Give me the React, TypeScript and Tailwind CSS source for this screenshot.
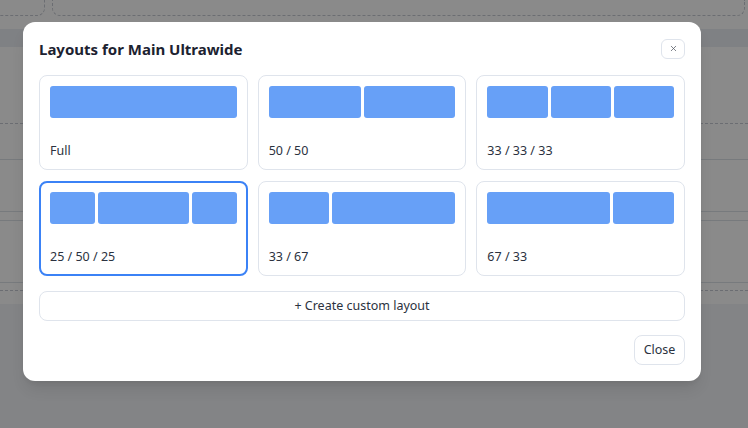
import { X } from "lucide-react"

type Layout = {
  name: string
  parts: number[]
}

const layouts: Layout[] = [
  { name: "Full", parts: [100] },
  { name: "50 / 50", parts: [50, 50] },
  { name: "33 / 33 / 33", parts: [33, 33, 33] },
  { name: "25 / 50 / 25", parts: [25, 50, 25] },
  { name: "33 / 67", parts: [33, 67] },
  { name: "67 / 33", parts: [67, 33] },
]

const selected = "25 / 50 / 25"

function LayoutCard({ layout }: { layout: Layout }) {
  const active = layout.name === selected
  return (
    <button
      className={
        active
          ? "flex h-[95px] flex-col justify-between rounded-lg border-2 border-[#3b82f6] bg-white p-[9px] text-left"
          : "flex h-[95px] flex-col justify-between rounded-lg border border-[#dfe4ec] bg-white p-[10px] text-left"
      }
    >
      <div className="flex h-[32px] w-full gap-[3px]">
        {layout.parts.map((p, i) => (
          <div key={i} className="h-full rounded-[3px] bg-[#67a0f7]" style={{ flexGrow: p, flexBasis: 0 }} />
        ))}
      </div>
      <span className="text-[12.5px] leading-[16px] text-[#2b3240]">{layout.name}</span>
    </button>
  )
}

export default function App() {
  return (
    <div className="relative h-[428px] w-[748px] overflow-hidden bg-white font-['Noto_Sans',sans-serif]">
      {/* page underneath */}
      <div className="flex h-[29px] gap-[7px] px-0">
        <div className="ml-[-10px] h-[16px] w-[55px] rounded-b-lg border border-t-0 border-dashed border-[#c6cad2]" />
        <div className="h-[16px] w-[693px] rounded-b-lg border border-t-0 border-dashed border-[#c6cad2]" />
      </div>
      <div className="h-[18px] bg-[#ebeff4]" />
      <div className="h-[77px] border-b border-dashed border-[#c6cad2]" />
      <div className="h-[36px] border-b border-[#dde1e8]" />
      <div className="h-[52px] border-b border-[#dde1e8]" />
      <div className="h-[9px] border-b border-[#dde1e8]" />
      <div className="h-[62px] border-b border-[#dde1e8]" />
      <div className="h-[8px] border-b border-dashed border-[#c6cad2]" />
      <div className="h-[13px]" />
      <div className="h-[124px] bg-[#f3f4f7]" />

      {/* overlay */}
      <div className="absolute inset-0 bg-black/[0.46] pl-[23px] pt-[22px]">
        <div className="flex w-[678px] flex-col rounded-xl bg-white p-4 shadow-lg">
          <div className="flex h-[21px] items-center justify-between">
            <h2 className="text-[15px] font-bold leading-[22px] text-[#1c2230]">Layouts for Main Ultrawide</h2>
            <button className="flex h-[20px] w-[24px] items-center justify-center rounded-md border border-[#dfe4ec] bg-white text-[#555b66]">
              <X size={9} strokeWidth={2} />
            </button>
          </div>

          <div className="mt-[16px] grid grid-cols-3 gap-x-[10px] gap-y-[11px]">
            {layouts.map((l) => (
              <LayoutCard key={l.name} layout={l} />
            ))}
          </div>

          <button className="mt-[15px] h-[30px] w-full rounded-lg border border-[#dfe4ec] bg-white pt-px text-[12.5px] text-[#2b3240]">
            + Create custom layout
          </button>

          <div className="mt-[14px] flex justify-end">
            <button className="h-[30px] w-[51px] rounded-lg border border-[#dfe4ec] bg-white pt-px text-[12.5px] text-[#2b3240]">
              Close
            </button>
          </div>
        </div>
      </div>
    </div>
  )
}
